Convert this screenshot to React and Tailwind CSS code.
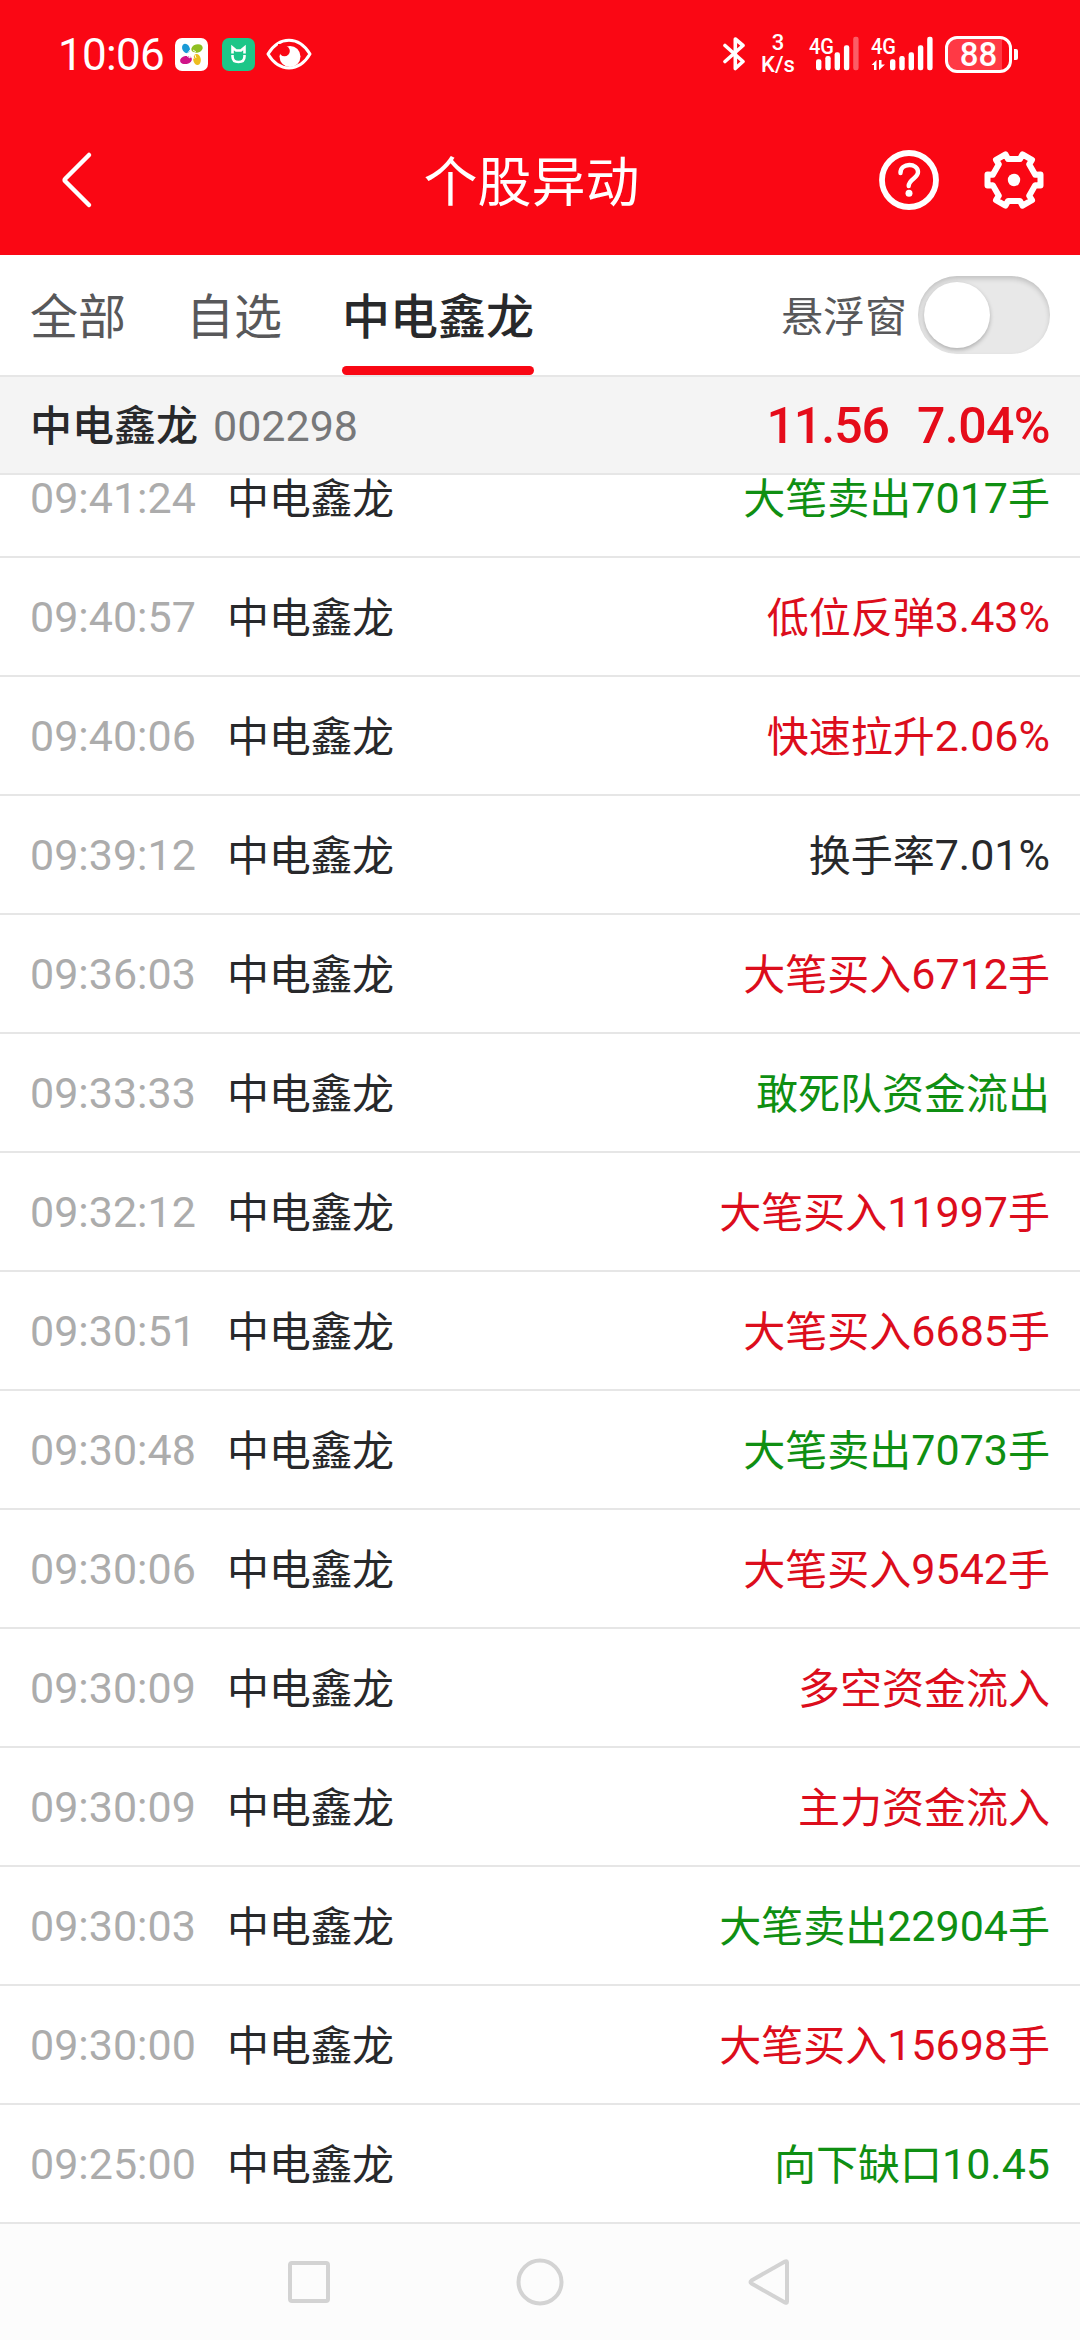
const records = [
  { time: '09:41:24', label: '大笔卖出', value: '7017', unit: '手', tone: 'down' },
  { time: '09:40:57', label: '低位反弹', value: '3.43%', tone: 'up' },
  { time: '09:40:06', label: '快速拉升', value: '2.06%', tone: 'up' },
  { time: '09:39:12', label: '换手率', value: '7.01%', tone: 'flat' },
  { time: '09:36:03', label: '大笔买入', value: '6712', unit: '手', tone: 'up' },
  { time: '09:33:33', label: '敢死队资金流出', tone: 'down' },
  { time: '09:32:12', label: '大笔买入', value: '11997', unit: '手', tone: 'up' },
  { time: '09:30:51', label: '大笔买入', value: '6685', unit: '手', tone: 'up' },
  { time: '09:30:48', label: '大笔卖出', value: '7073', unit: '手', tone: 'down' },
  { time: '09:30:06', label: '大笔买入', value: '9542', unit: '手', tone: 'up' },
  { time: '09:30:09', label: '多空资金流入', tone: 'up' },
  { time: '09:30:09', label: '主力资金流入', tone: 'up' },
  { time: '09:30:03', label: '大笔卖出', value: '22904', unit: '手', tone: 'down' },
  { time: '09:30:00', label: '大笔买入', value: '15698', unit: '手', tone: 'up' },
  { time: '09:25:00', label: '向下缺口', value: '10.45', tone: 'down' },
];

const toneClass = {
  up: 'text-[#dc0d1c]',
  down: 'text-[#0f8f12]',
  flat: 'text-[#28292b]',
};

// Six teeth, two points on each tooth and two on each valley
const gearPoints = [0, 60, 120, 180, 240, 300]
  .flatMap((deg) => [
    [deg, 26.5, -5.5],
    [deg, 26.5, 5.5],
    [deg + 30, 21, -6],
    [deg + 30, 21, 6],
  ])
  .map(([deg, r, t]) => {
    const a = (deg * Math.PI) / 180;
    const x = r * Math.cos(a) - t * Math.sin(a);
    const y = r * Math.sin(a) + t * Math.cos(a);
    return `${x.toFixed(2)},${y.toFixed(2)}`;
  })
  .join(' ');

function SignalBars({ x, faded }) {
  const tops = [59.3, 56, 52.3, 45.3, 36.7];
  return tops.map((top, i) => (
    <rect
      key={top}
      x={x + i * 9.3}
      y={top - 36}
      width="5.4"
      height={70.2 - top}
      rx="2.2"
      opacity={faded && i === 4 ? 0.35 : 1}
    />
  ));
}

function StatusBar() {
  return (
    <div className="flex h-[108px] items-center justify-between pl-[58px] pr-[62px] text-white">
      <div className="flex items-center">
        <span className="w-[117px] pt-[2px] font-[Roboto] text-[44px] leading-none tracking-[-0.7px]">10:06</span>
        <svg className="h-[33px] w-[33px]" viewBox="0 0 33 33">
          <rect width="33" height="33" rx="7" fill="#fff" />
          <ellipse cx="11" cy="10.5" rx="3.7" ry="5" fill="#1a9ad6" transform="rotate(-25 11 10.5)" />
          <ellipse cx="22" cy="10.5" rx="5.8" ry="4.2" fill="#8fbf21" transform="rotate(-15 22 10.5)" />
          <ellipse cx="11" cy="22" rx="6" ry="4" fill="#cf1388" transform="rotate(-12 11 22)" />
          <ellipse cx="22" cy="21.5" rx="3.8" ry="5.6" fill="#edbd1f" transform="rotate(-8 22 21.5)" />
          <path d="M12 16l3-4M14 16.500l2-3M18 12l3 2M17.500 14l3 1M12 18l3 2M13.500 17l2 3M18 18l1 3M20 17l1 3" stroke="#fff" strokeWidth="0.9" />
        </svg>
        <svg className="ml-[14px] h-[33px] w-[33px]" viewBox="0 0 33 33">
          <rect width="33" height="33" rx="7" fill="#1dc688" />
          <path d="M10.500 15.500V9.500l3.600 3h4.800l3.600-3v6M10.500 17v1.500q0 5.500 6 5.500t6-5.500V17" fill="none" stroke="#fff" strokeWidth="2.600" />
        </svg>
        <svg className="ml-[11px] h-[32px] w-[46px]" viewBox="0 0 46 32">
          <path d="M2 16C13-2.500 33-2.500 44 16C33 34.500 13 34.500 2 16Z" fill="none" stroke="#fff" strokeWidth="3" strokeLinejoin="round" />
          <circle cx="24" cy="18.500" r="10.500" fill="#fff" />
          <circle cx="18.500" cy="13" r="5.300" fill="#fa0714" />
          <path d="M12 6h10l-4 6-6 4Z" fill="#fa0714" />
        </svg>
      </div>

      <div className="flex items-center font-[Roboto]">
        <svg className="h-[36px] w-[23px]" viewBox="0 0 23 36" fill="none" stroke="#fff" strokeWidth="3.600" strokeLinejoin="round" strokeLinecap="round">
          <path d="M2 9.500L20 25.500L12.300 32.500V3L20 9.500L2 25.500" />
        </svg>
        <div className="ml-[14px] flex w-[36px] flex-col items-center text-[22px] font-medium leading-[22px]">
          <span>3</span>
          <span>K/s</span>
        </div>
        <svg className="ml-[13px] h-[36px] w-[51px] overflow-visible" viewBox="0 0 51 36" fill="#fff">
          <text x="0" y="17.500" fontSize="22" fontWeight="500" textLength="25" lengthAdjust="spacingAndGlyphs">4G</text>
          <SignalBars x={7} faded />
        </svg>
        <svg className="ml-[11px] h-[36px] w-[63px] overflow-visible" viewBox="0 0 63 36" fill="#fff">
          <text x="0" y="17.500" fontSize="22" fontWeight="500" textLength="25" lengthAdjust="spacingAndGlyphs">4G</text>
          <path d="M0.500 29L5.500 24V34H3V29ZM8 24H10.500V28.500H14L8 34Z" />
          <SignalBars x={19} />
        </svg>
        <div className="ml-[11px] flex h-[37px] w-[67px] items-center rounded-[12px] border-[3px] border-white bg-[linear-gradient(90deg,#ff3945_88%,transparent_88%)]">
          <span className="w-full text-center text-[33px] font-medium leading-none">88</span>
        </div>
        <span className="ml-[2px] h-[11px] w-[4px] rounded-r-[2px] bg-white" />
      </div>
    </div>
  );
}

function TitleBar() {
  return (
    <div className="flex h-[147px] items-center justify-between pb-[3px] pl-[60px] pr-[35px] text-white">
      <div className="w-[124px]">
        <svg className="h-[60px] w-[34px]" viewBox="0 0 34 60" fill="none" stroke="#fff" strokeWidth="4.500" strokeLinecap="round" strokeLinejoin="round">
          <path d="M29 5L5.500 28.500Q4 30 5.500 31.500L29 55" />
        </svg>
      </div>
      <h1 className="pb-[2px] text-center text-[54px] leading-none">个股异动</h1>
      <div className="flex w-[166px] items-center justify-between">
        <svg className="h-[60px] w-[60px]" viewBox="-30 -30 60 60" fill="none" stroke="#fff">
          <circle r="27" strokeWidth="5.800" />
          <path d="M-8.500-7C-8.500-17.500 9-17.500 9-8C9-1.500-0.300-1-0.300 6" strokeWidth="4.400" strokeLinecap="round" />
          <circle cy="13.300" r="3.500" fill="#fff" stroke="none" />
        </svg>
        <svg className="h-[62px] w-[62px]" viewBox="-31 -31 62 62" fill="none" stroke="#fff">
          <polygon points={gearPoints} strokeWidth="6" strokeLinejoin="round" />
          <circle r="6.200" fill="#fff" stroke="none" />
        </svg>
      </div>
    </div>
  );
}

function Tabs() {
  return (
    <div className="flex h-[122px] items-stretch justify-between border-b-2 border-[#e6e6e6] px-[30px]">
      <div className="flex items-start gap-[60px] text-[48px] text-[#58585a]">
        <button className="leading-[117px]">全部</button>
        <button className="leading-[117px]">自选</button>
        <button className="flex flex-col font-medium text-[#28292b]">
          <span className="h-[111px] leading-[117px]">中电鑫龙</span>
          <span className="h-[9px] w-full rounded-full bg-[#f90714]" />
        </button>
      </div>
      <div className="flex items-center gap-[11px] text-[42px] text-[#58585a]">
        <span className="pb-[4px]">悬浮窗</span>
        <div className="flex h-[78px] w-[132px] items-center rounded-full bg-[#e8e8e8] pl-[6px] shadow-[inset_0_3px_5px_rgba(0,0,0,0.16)]">
          <span className="h-[66px] w-[66px] rounded-full bg-white shadow-[0_2px_4px_rgba(0,0,0,0.25)]" />
        </div>
      </div>
    </div>
  );
}

function StockSummary() {
  return (
    <div className="flex h-[98px] items-center justify-between border-b-2 border-[#e6e6e6] bg-[#f4f4f4] px-[30px]">
      <div className="flex items-center">
        <span className="pb-[4px] text-[42px] font-medium leading-none text-[#28292b]">中电鑫龙</span>
        <span className="ml-[15px] pt-[2px] font-[Roboto] text-[43px] leading-none text-[#77787a]">002298</span>
      </div>
      <div className="flex gap-[28px] pt-[2px] font-[Roboto] text-[50px] font-medium leading-none text-[#e50c1a]">
        <span className="tracking-[-1px]">11.56</span>
        <span className="tracking-[-0.6px]">7.04%</span>
      </div>
    </div>
  );
}

function RecordRow({ record }) {
  return (
    <div className="flex h-[119px] shrink-0 items-center border-b-2 border-[#e6e6e6] px-[30px] text-[42px] leading-none">
      <span className="w-[197px] pt-[2px] font-[Roboto] text-[43px] text-[#acacac]">{record.time}</span>
      <span className="pb-[4px] tracking-[-0.3px] text-[#28292b]">中电鑫龙</span>
      <span className={`ml-auto flex items-center ${toneClass[record.tone]}`}>
        <span className="pb-[4px]">{record.label}</span>
        {record.value && <span className="pt-[2px] font-[Roboto] text-[43px]">{record.value}</span>}
        {record.unit && <span className="pb-[4px]">{record.unit}</span>}
      </span>
    </div>
  );
}

function NavigationBar() {
  return (
    <div className="flex flex-1 items-start bg-[#fcfcfc] pl-[286px] pt-[32px]">
      <svg className="h-[52px] w-[505px]" viewBox="0 0 505 52" fill="none" stroke="#d3d3d3" strokeWidth="4" strokeLinejoin="round">
        <rect x="4" y="7" width="38" height="38" rx="2" />
        <circle cx="254" cy="26" r="21.500" />
        <path d="M501 6.500V45.500Q501 47.500 499 46.500L465.500 27.500Q463.500 26 465.500 24.500L499 5.500Q501 4.500 501 6.500Z" />
      </svg>
    </div>
  );
}

function App() {
  return (
    <div className="flex h-[2340px] w-[1080px] flex-col overflow-hidden bg-white font-['Noto_Sans_CJK_SC',sans-serif]">
      <header className="bg-[#fa0714]">
        <StatusBar />
        <TitleBar />
      </header>
      <Tabs />
      <StockSummary />
      {/* scrolled so that the first row sits partly under the summary */}
      <main className="flex h-[1749px] flex-col justify-end overflow-hidden">
        {records.map((record, index) => (
          <RecordRow key={index} record={record} />
        ))}
      </main>
      <NavigationBar />
    </div>
  );
}

export default App;
